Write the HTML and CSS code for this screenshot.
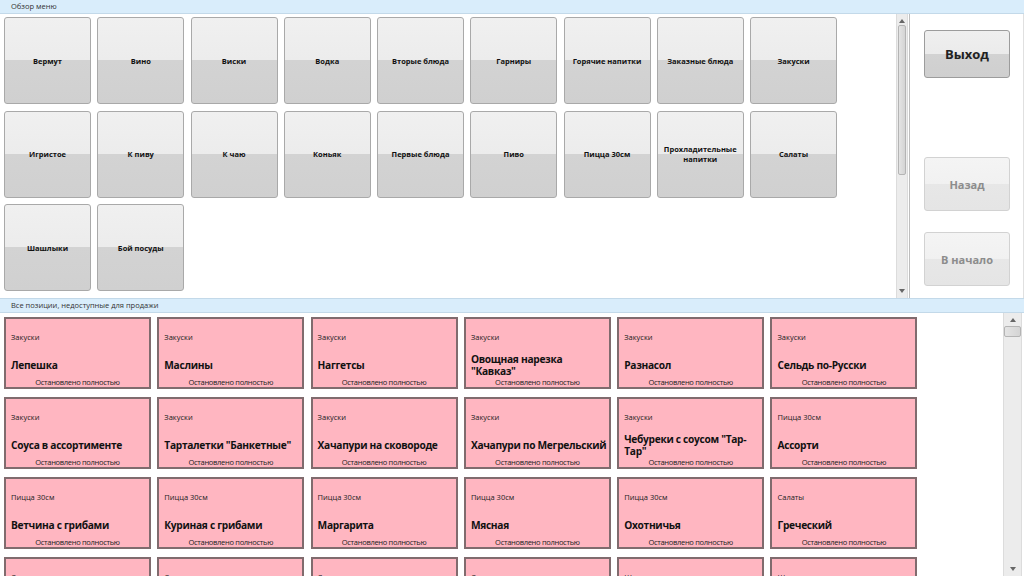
FILE: index.html
```html
<!DOCTYPE html>
<html lang="ru">

<head>
    <meta charset="UTF-8">
    <title>Обзор меню</title>
    <link rel="stylesheet" href="styles.css">
</head>

<body>
    <header class="sectionTitle">Обзор меню</header>
    <section class="menuSection">
        <div class="menuGrid">
            <button class="menuButton">Вермут</button>
            <button class="menuButton">Вино</button>
            <button class="menuButton">Виски</button>
            <button class="menuButton">Водка</button>
            <button class="menuButton">Вторые блюда</button>
            <button class="menuButton">Гарниры</button>
            <button class="menuButton">Горячие напитки</button>
            <button class="menuButton">Заказные блюда</button>
            <button class="menuButton">Закуски</button>
            <button class="menuButton">Игристое</button>
            <button class="menuButton">К пиву</button>
            <button class="menuButton">К чаю</button>
            <button class="menuButton">Коньяк</button>
            <button class="menuButton">Первые блюда</button>
            <button class="menuButton">Пиво</button>
            <button class="menuButton">Пицца 30см</button>
            <button class="menuButton">Прохладительные напитки</button>
            <button class="menuButton">Салаты</button>
            <button class="menuButton">Шашлыки</button>
            <button class="menuButton">Бой посуды</button>
        </div>
        <div class="scrollbar scrollbar-menu">
            <span class="scrollArrow scrollArrow-up"></span>
            <span class="scrollThumb scrollThumb-menu"></span>
            <span class="scrollArrow scrollArrow-down"></span>
        </div>
        <aside class="sidePanel">
            <button class="sideButton">Выход</button>
            <button class="sideButton sideButton-disabled sideButton-back">Назад</button>
            <button class="sideButton sideButton-disabled">В начало</button>
        </aside>
    </section>
    <header class="sectionTitle sectionTitle-stopped">Все позиции, недоступные для продажи</header>
    <section class="stoppedSection">
        <div class="stoppedGrid" id="stoppedGrid"></div>
        <div class="scrollbar scrollbar-stopped">
            <span class="scrollArrow scrollArrow-up"></span>
            <span class="scrollThumb scrollThumb-stopped"></span>
            <span class="scrollArrow scrollArrow-down"></span>
        </div>
    </section>
    <script>
        var items = [
            ['Закуски', 'Лепешка'],
            ['Закуски', 'Маслины'],
            ['Закуски', 'Наггетсы'],
            ['Закуски', 'Овощная нарезка "Кавказ"'],
            ['Закуски', 'Разнасол'],
            ['Закуски', 'Сельдь по-Русски'],
            ['Закуски', 'Соуса в ассортименте'],
            ['Закуски', 'Тарталетки "Банкетные"'],
            ['Закуски', 'Хачапури на сковороде'],
            ['Закуски', 'Хачапури по Мегрельский'],
            ['Закуски', 'Чебуреки с соусом "Тар-Тар"'],
            ['Пицца 30см', 'Ассорти'],
            ['Пицца 30см', 'Ветчина с грибами'],
            ['Пицца 30см', 'Куриная с грибами'],
            ['Пицца 30см', 'Маргарита'],
            ['Пицца 30см', 'Мясная'],
            ['Пицца 30см', 'Охотничья'],
            ['Салаты', 'Греческий'],
            ['Салаты', 'Мимоза'],
            ['Салаты', 'Оливье'],
            ['Салаты', 'Цезарь'],
            ['Салаты', 'Шуба'],
            ['Шашлыки', 'Из свинины'],
            ['Шашлыки', 'Из курицы']
        ];

        var html = '';
        items.forEach(function (item) {
            html += '<div class="stoppedItem">';
            html += '<span class="stoppedItem-group">' + item[0] + '</span>';
            html += '<span class="stoppedItem-name">' + item[1].replace(/"/g, '&quot;') + '</span>';
            html += '<span class="stoppedItem-status">Остановлено полностью</span>';
            html += '</div>';
        });
        document.getElementById('stoppedGrid').innerHTML = html;
    </script>
</body>

</html>
```
FILE: styles.css
```css
html,
button {
    font-family: 'Open Sans', 'Noto Sans', 'DejaVu Sans', sans-serif;
}

body {
    margin: 0;
    width: 1024px;
    height: 576px;
    overflow: hidden;
    background: white;
    color: #111;
}

button {
    margin: 0;
    padding: 0;
    cursor: pointer;
}

button:focus {
    outline: none;
}

.sectionTitle {
    height: 13px;
    line-height: 13px;
    padding-left: 11px;
    font-size: 7.5px;
    color: #333;
    background: #d9edfb;
    border-bottom: 1px solid #c3d9e9;
}

.sectionTitle-stopped {
    border-top: 1px solid #c3d9e9;
}

/* верхняя часть: группы меню */
.menuSection {
    display: flex;
    height: 284px;
}

.menuGrid {
    flex: 1;
    display: grid;
    grid-template-columns: repeat(9, 87px);
    grid-auto-rows: 87px;
    column-gap: 6.25px;
    row-gap: 6.5px;
    align-content: start;
    padding: 3px 0 0 4px;
}

.menuButton {
    border: 1px solid #a9a9a9;
    border-radius: 3px;
    background: linear-gradient(#f0f0f0 0%, #ececec 49%, #d3d3d3 50%, #d0d0d0 100%);
    font-size: 7.5px;
    font-weight: 700;
    color: #111;
    line-height: 10px;
    padding: 0 4px;
}

.scrollbar {
    display: flex;
    flex-direction: column;
    align-items: center;
    background: #ececec;
    border-left: 1px solid #dcdcdc;
    border-right: 1px solid #dcdcdc;
}

.scrollbar-menu {
    width: 10px;
    margin-right: 1px;
}

.scrollArrow {
    width: 0;
    height: 0;
    margin: 5px 0;
    border-left: 3px solid transparent;
    border-right: 3px solid transparent;
}

.scrollArrow-up {
    border-bottom: 4px solid #666;
}

.scrollArrow-down {
    margin-top: auto;
    border-top: 4px solid #666;
}

.scrollThumb {
    box-sizing: border-box;
    background: linear-gradient(90deg, #e4e4e4, #d4d4d4);
    border: 1px solid #b4b4b4;
    border-radius: 2px;
}

.scrollThumb-menu {
    width: 8px;
    height: 150px;
    margin-top: -3px;
}

.sidePanel {
    width: 99px;
    border-left: 1px solid #bdbdbd;
    border-right: 1px solid #e0e0e0;
    padding: 16px 0 0 14px;
    display: flex;
    flex-direction: column;
    align-items: flex-start;
}

.sideButton {
    width: 86px;
    height: 48px;
    border: 1px solid #9c9c9c;
    border-radius: 3px;
    background: linear-gradient(#efefef 0%, #ebebeb 49%, #d2d2d2 50%, #cfcfcf 100%);
    font-size: 13px;
    font-weight: 700;
    color: #222;
}

.sideButton-disabled {
    height: 54px;
    margin-top: 21px;
    border-color: #d2d2d2;
    background: linear-gradient(#f4f4f4 0%, #f1f1f1 49%, #e7e7e7 50%, #e5e5e5 100%);
    font-size: 11px;
    color: #8c8c8c;
}

.sideButton-back {
    margin-top: 79px;
}

/* нижняя часть: стоп-лист */
.stoppedSection {
    display: flex;
    height: 263px;
    overflow: hidden;
}

.stoppedGrid {
    flex: 1;
    display: grid;
    grid-template-columns: repeat(6, 147px);
    grid-auto-rows: 72px;
    column-gap: 6.3px;
    row-gap: 8px;
    align-content: start;
    padding: 4px 0 0 4px;
}

.stoppedItem {
    box-sizing: border-box;
    display: flex;
    flex-direction: column;
    background: #ffb6c1;
    border: 2px solid #806b6e;
    padding: 0 2px 0 5px;
}

.stoppedItem-group {
    margin-top: 13px;
    font-size: 7.5px;
    line-height: 10px;
    color: #222;
}

.stoppedItem-name {
    height: 24px;
    margin-top: 11px;
    display: flex;
    align-items: center;
    font-size: 10.2px;
    font-weight: 700;
    letter-spacing: -0.3px;
    line-height: 12px;
    color: #111;
}

.stoppedItem-status {
    margin-left: -3px;
    font-size: 7.5px;
    letter-spacing: -0.3px;
    line-height: 10px;
    text-align: center;
    color: #222;
}

.scrollbar-stopped {
    width: 17px;
    margin-right: 2px;
}

.scrollThumb-stopped {
    width: 17px;
    height: 11px;
    margin-top: -1px;
}
```
